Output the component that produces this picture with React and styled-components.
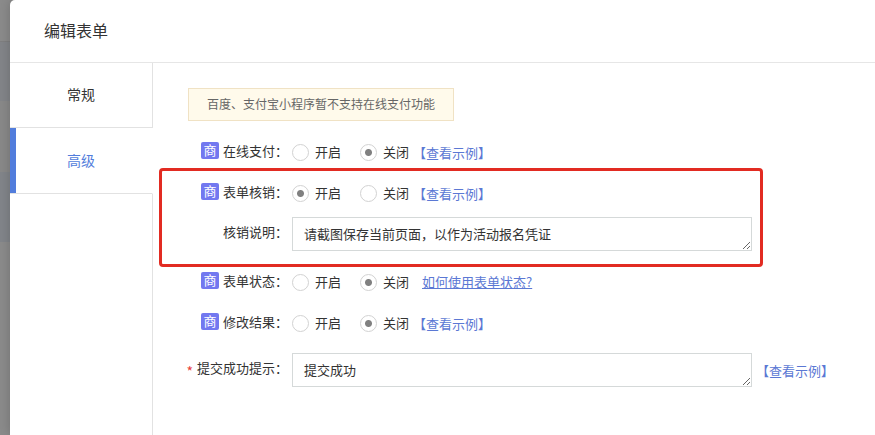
import React, { useState } from "react";
import styled, { createGlobalStyle } from "styled-components";

const GlobalStyle = createGlobalStyle`
  * {
    box-sizing: border-box;
  }
  body {
    margin: 0;
    color: #333;
    font-family: "Noto Sans CJK SC", sans-serif;
    font-size: 13px;
    line-height: 20px;
  }
  button, input, textarea {
    font-family: inherit;
  }
`;

const Backdrop = styled.div`
  display: flex;
  min-height: 100vh;
  padding-left: 10px;
  background: linear-gradient(
    #8b8b8b 0 41px,
    #7f7f80 41px 42px,
    #838589 42px 101px,
    #898989 101px 172px,
    #82858a 172px 242px,
    #8b8b8b 242px
  );
`;

const Dialog = styled.div`
  flex: 1;
  min-width: 0;
  display: flex;
  flex-direction: column;
  background-color: #fff;
  border-top-left-radius: 5px;
  box-shadow: 0 0 12px rgba(0, 0, 0, 0.2);
`;

const Header = styled.div`
  display: flex;
  align-items: center;
  height: 63px;
  padding: 0 34px 2px;
  border-bottom: 1px solid #e6e6e6;
`;

const Title = styled.h1`
  margin: 0;
  font-size: 16px;
  font-weight: 400;
  line-height: 24px;
`;

const Main = styled.div`
  flex: 1;
  display: flex;
`;

const Sidebar = styled.div`
  flex: none;
  display: flex;
  flex-direction: column;
  width: 143px;
`;

const Tab = styled.button`
  height: ${(props) => (props.$active ? "66px" : "65px")};
  padding: 0 0 2px;
  border: 0;
  border-right: 1px solid ${(props) => (props.$active ? "#fff" : "#e2e2e2")};
  border-bottom: 1px solid #e2e2e2;
  background-color: #fff;
  box-shadow: ${(props) => (props.$active ? "inset 6px 0 #527ddc" : "none")};
  color: ${(props) => (props.$active ? "#527ddc" : "#333")};
  font-size: 14px;
  cursor: pointer;
`;

const SidebarRest = styled.div`
  flex: 1;
  border-right: 1px solid #e2e2e2;
`;

const Form = styled.form`
  flex: 1;
  min-width: 0;
  padding: 25px 35px;
`;

const Notice = styled.p`
  width: fit-content;
  margin: 0 0 11px;
  padding: 5px 18px 6px;
  border: 1px solid #f0e2c4;
  background-color: #fffaeb;
  color: #666;
  font-size: 12px;
  line-height: 20px;
`;

const Row = styled.div`
  display: flex;
  align-items: center;
  height: 41px;
  white-space: nowrap;
`;

const TextRow = styled(Row)`
  height: auto;
  padding: ${(props) => (props.$last ? "9px 0 0" : "3px 0 11px")};

  a {
    padding-top: 2px;
  }
`;

const RowLabel = styled.div`
  flex: none;
  display: flex;
  align-items: center;
  justify-content: flex-end;
  gap: 4px;
  width: 100px;
  margin-right: 4px;
  padding-bottom: 4px;
`;

const Badge = styled.span`
  width: 18px;
  height: 17px;
  border-radius: 2px;
  background-color: #7278f0;
  color: #fff;
  line-height: 16px;
  text-align: center;
`;

const Required = styled.span`
  padding-top: 6px;
  color: #e8403a;
  font-size: 14px;
  line-height: 16px;
`;

const Option = styled.label`
  display: flex;
  align-items: center;
  gap: 6px;
  margin-right: 19px;
  cursor: pointer;

  &:last-of-type {
    margin-right: 0;
  }
`;

const OptionText = styled.span`
  padding-bottom: 2px;
`;

const Radio = styled.input`
  appearance: none;
  width: 17px;
  height: 17px;
  margin: 0;
  border: 1px solid #d2d2d2;
  border-radius: 50%;
  background-color: #fff;

  &:checked {
    background-image: radial-gradient(circle, #808080 3px, transparent 4px);
  }
`;

const TextBox = styled.textarea`
  display: block;
  width: 460px;
  height: 34px;
  padding: 0 11px;
  border: 1px solid #d5d9d9;
  background-color: #fff;
  color: #333;
  font-size: 13px;
  line-height: 31px;
  overflow: hidden;
`;

const HelpLink = styled.a`
  margin-left: ${(props) => (props.$underline ? "13px" : "4px")};
  padding-bottom: ${(props) => (props.$underline ? "2px" : "0")};
  color: #5b78d4;
  text-decoration: ${(props) => (props.$underline ? "underline" : "none")};
`;

const Group = styled.div`
  position: relative;
  width: fit-content;
`;

const Highlight = styled.div`
  position: absolute;
  inset: -5px -11px -5px -29px;
  border: 3px solid #e22b22;
  border-radius: 4px;
  pointer-events: none;
`;

const Example = () => <HelpLink href="#example">【查看示例】</HelpLink>;

const SwitchRow = ({ name, label, initial, children }) => {
  const [value, setValue] = useState(initial);
  return (
    <Row role="radiogroup" aria-labelledby={name + "-label"}>
      <RowLabel>
        <Badge>商</Badge>
        <span id={name + "-label"}>{label}：</span>
      </RowLabel>
      <Option>
        <Radio
          type="radio"
          name={name}
          checked={value === "on"}
          onChange={() => setValue("on")}
        />
        <OptionText>开启</OptionText>
      </Option>
      <Option>
        <Radio
          type="radio"
          name={name}
          checked={value === "off"}
          onChange={() => setValue("off")}
        />
        <OptionText>关闭</OptionText>
      </Option>
      {children}
    </Row>
  );
};

const App = () => {
  const [tab, setTab] = useState("高级");
  return (
    <>
      <GlobalStyle />
      <Backdrop>
        <Dialog>
          <Header>
            <Title>编辑表单</Title>
          </Header>
          <Main>
            <Sidebar>
              {["常规", "高级"].map((item) => (
                <Tab key={item} $active={tab === item} onClick={() => setTab(item)}>
                  {item}
                </Tab>
              ))}
              <SidebarRest />
            </Sidebar>
            <Form>
              <Notice>百度、支付宝小程序暂不支持在线支付功能</Notice>
              <SwitchRow name="pay" label="在线支付" initial="off">
                <Example />
              </SwitchRow>
              <Group>
                <SwitchRow name="verify" label="表单核销" initial="on">
                  <Example />
                </SwitchRow>
                <TextRow>
                  <RowLabel>
                    <label htmlFor="verify-note">核销说明：</label>
                  </RowLabel>
                  <TextBox
                    id="verify-note"
                    rows={1}
                    defaultValue="请截图保存当前页面，以作为活动报名凭证"
                  />
                </TextRow>
                <Highlight />
              </Group>
              <SwitchRow name="status" label="表单状态" initial="off">
                <HelpLink href="#status" $underline>
                  如何使用表单状态?
                </HelpLink>
              </SwitchRow>
              <SwitchRow name="modify" label="修改结果" initial="off">
                <Example />
              </SwitchRow>
              <TextRow $last>
                <RowLabel>
                  <Required>*</Required>
                  <label htmlFor="success">提交成功提示：</label>
                </RowLabel>
                <TextBox id="success" rows={1} defaultValue="提交成功" />
                <Example />
              </TextRow>
            </Form>
          </Main>
        </Dialog>
      </Backdrop>
    </>
  );
};

export default App;
